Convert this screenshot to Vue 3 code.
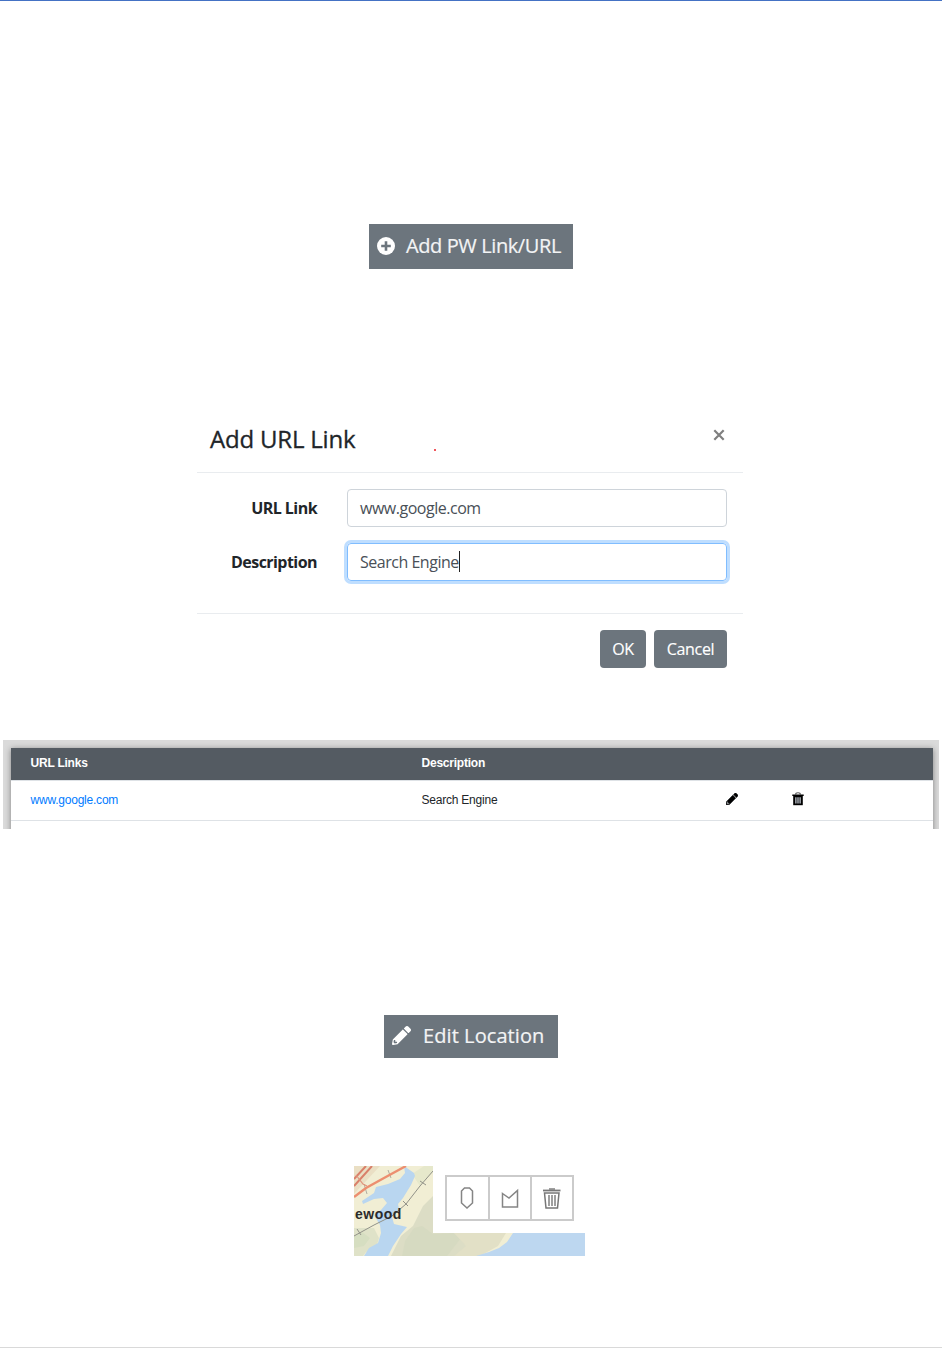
<script setup>
import { ref } from 'vue'

const urlLink = ref('www.google.com')
const description = ref('Search Engine')

const links = ref([{ url: 'www.google.com', description: 'Search Engine' }])

// solid pencil, shared by the table row and the edit button
const PENCIL_PATH =
  'M498 142l-46 46c-5 5-13 5-17 0L324 77c-5-5-5-12 0-17l46-46c19-19 49-19 68 0l60 60c19 19 19 49 0 68zM284 100L22 362 0 484c-3 16 12 30 28 28l122-22 262-262c5-5 5-13 0-17L301 100c-4-5-12-5-17 0zM88 424h48v36l-64 12-32-31 12-65h36v48z'
</script>

<template>
  <main class="page">
    <button class="action add" type="button">
      <svg class="plus-icon" viewBox="0 0 18 18">
        <circle cx="9" cy="9" r="9" fill="#fff" />
        <path d="M9 4.2v9.6M4.2 9h9.6" stroke="#6c757d" stroke-width="2.6" />
      </svg>
      <span class="add-text">Add PW Link/URL</span>
    </button>

    <section class="modal">
      <header class="modal-header">
        <h5>Add URL Link</h5>
        <i class="dot"></i>
        <button class="close" type="button" aria-label="Close">
          <svg viewBox="0 0 12 12">
            <path d="M1.3 1.3l9.4 9.4M10.7 1.3L1.3 10.7" stroke="#7f7f7f" stroke-width="2.2" />
          </svg>
        </button>
      </header>
      <div class="modal-body">
        <div class="field">
          <label>URL Link</label>
          <div class="input">{{ urlLink }}</div>
        </div>
        <div class="field">
          <label>Description</label>
          <div class="input focused">
            <span>{{ description }}</span><i class="caret"></i>
          </div>
        </div>
      </div>
      <footer class="modal-footer">
        <button class="btn ok" type="button">OK</button>
        <button class="btn cancel" type="button">Cancel</button>
      </footer>
    </section>

    <section class="table-wrap">
      <div class="table">
        <div class="row head">
          <span>URL Links</span>
          <span>Description</span>
        </div>
        <div v-for="link in links" :key="link.url" class="row">
          <a>{{ link.url }}</a>
          <span>{{ link.description }}</span>
          <svg class="row-pencil" viewBox="0 0 512 512">
            <path :d="PENCIL_PATH" stroke="#212529" stroke-width="24" />
          </svg>
          <svg class="row-trash" viewBox="0 0 12 14">
            <path d="M3.6 2.6C3.6 1 4.6.8 6 .8s2.4.2 2.4 1.8" fill="none" stroke="#555" stroke-width="1.1" />
            <path d="M.3 2.5h11.4V4H.3z" />
            <path d="M1.2 4h9.6v9.2H1.2z" />
            <path d="M3.9 5.3v6.2M6 5.3v6.2M8.1 5.3v6.2" stroke="#dfe6f0" stroke-width="1.1" />
          </svg>
        </div>
      </div>
    </section>

    <button class="action edit" type="button">
      <svg class="edit-pencil" viewBox="0 0 512 512"><path :d="PENCIL_PATH" fill="#fff" /></svg>
      <span class="edit-text">Edit Location</span>
    </button>

    <section class="map">
      <svg class="map-tiles" viewBox="0 0 231 90">
        <rect width="231" height="90" fill="#f1eed4" />
        <path d="M0 0h26L0 28z" fill="#eadfc4" />
        <!-- hills -->
        <path d="M79 30l-10 10-10 20-12 10-10 20h90l16-23V60H79z" fill="#dcddc5" />
        <path d="M60 62l8-2 11 8 20-1 8 5-14 18H48l3-15z" fill="#d6dac1" />
        <path d="M100 67h52l-8 13-18 10h-26l12-10z" fill="#e2e0c6" />
        <path d="M0 62h20l5 10-3 10-10 4-3 4H0z" fill="#dfe2c8" />
        <path d="M0 70l8-4 8 6-6 8-10 2z" fill="#d6dec1" />
        <path d="M58 8l12-8h9v6L66 20z" fill="#e6e8cb" />
        <!-- water -->
        <path
          d="M50 0l1 7-5 6-12 5-12 3-2 6-12 8 1 3 11-5 9-1 4 5-6 7-7 5 6 10 1 8-3 10-9 5-5 8h24l5-10 8-12 6-7-13-3-2-7 7-8-1-5 5-6 8-13 4-9-1-3z"
          fill="#b9d6f0"
        />
        <path d="M122 90l13-4 10-4 8-6 6-9h72v23z" fill="#bdd7f0" />
        <!-- railway -->
        <path d="M0 70l20-11 18-9 14-12 14-18L79 5" fill="none" stroke="#929289" stroke-width="1" />
        <path d="M3 63l4 6M49 35l5 5M66 15l6 4" stroke="#929289" stroke-width="1" />
        <!-- roads -->
        <path d="M10 18l3 10M34 4l3 8" stroke="#b1aea0" stroke-width="1" />
        <path d="M0 31l12-9 18-10L52 0" fill="none" stroke="#ec8f70" stroke-width="2.4" />
        <path d="M0 13L12 0M0 20L18 0" fill="none" stroke="#d9806a" stroke-width="2" />
        <path d="M2 9l7 9 4 2" fill="none" stroke="#e0947c" stroke-width="1.2" />
        <path d="M79 0h152v67H79z" fill="#fff" />
      </svg>
      <span class="place">ewood</span>
      <div class="tools">
        <button type="button" aria-label="Point">
          <svg viewBox="0 0 43 44">
            <path d="M18.5 12h5l3 3v12L21 32l-5.500-5V15z" fill="none" stroke="#858585" stroke-width="1.5" />
          </svg>
        </button>
        <button type="button" aria-label="Polygon">
          <svg viewBox="0 0 43 44">
            <path d="M13.500 17.500l6.500 4.500 8.500-7.500V31h-15z" fill="none" stroke="#858585" stroke-width="1.5" />
          </svg>
        </button>
        <button type="button" aria-label="Delete">
          <svg viewBox="0 0 43 44" fill="none" stroke="#777">
            <path d="M12 14.5h17.500" stroke-width="1.8" />
            <path d="M18 13h6" stroke-width="1.4" />
            <path d="M13.5 17H28l-1.500 15H15z" stroke-width="1.5" />
            <path d="M18 19v11M21 19v11M24 19v11" stroke-width="1.4" />
          </svg>
        </button>
      </div>
    </section>
  </main>
</template>

<style>
body {
  margin: 0;
  background: #fff;
}
</style>

<style scoped>
.page {
  box-sizing: border-box;
  height: 1348px;
  display: flex;
  flex-direction: column;
  align-items: center;
  overflow: hidden;
  border-top: 1px solid #4472c4;
  border-bottom: 1px solid #d9d9d9;
  font-family: 'Open Sans', 'Noto Sans', sans-serif;
  color: #212529;
}

button {
  font-family: inherit;
  border: none;
  padding: 0;
  cursor: pointer;
}

svg {
  display: block;
  flex: none;
}

span,
label,
h5 {
  white-space: nowrap;
}

.action {
  flex: none;
  display: flex;
  align-items: center;
  background: #6c757d;
  color: #f3f4f5;
  -webkit-text-stroke: 0.2px;
}

.add {
  width: 204px;
  height: 45px;
  margin-top: 223px;
  padding: 0 0 1px 8px;
  font-size: 20px;
}

.plus-icon {
  width: 18px;
  height: 18px;
  margin-right: 11px;
}

.add-text {
  margin-bottom: 2px;
  letter-spacing: -0.4px;
}

.modal {
  width: 546px;
  height: 263px;
  flex: none;
  margin: 137px 0 0 -2px;
}

.modal-header {
  box-sizing: border-box;
  height: 67px;
  display: flex;
  align-items: flex-start;
  padding: 15px 18.5px 0 13px;
  border-bottom: 1px solid #e9ecef;
}

h5 {
  width: 145px;
  margin: 0;
  font-size: 24px;
  font-weight: 400;
  line-height: 36px;
  letter-spacing: -0.2px;
  -webkit-text-stroke: 0.3px;
}

.dot {
  width: 2px;
  height: 2px;
  margin: 28px 0 0 78.5px;
  border-radius: 1px;
  background: #ed1c24;
}

.close {
  width: 12px;
  height: 12px;
  margin: 8px 0 0 auto;
  background: none;
}

.modal-body {
  box-sizing: border-box;
  height: 140px;
  display: flex;
  flex-direction: column;
  gap: 16px;
  padding: 16px 16px 0;
}

.field {
  display: flex;
  justify-content: space-between;
}

label {
  width: 104px;
  margin-right: 1px;
  text-align: right;
  font-size: 16px;
  font-weight: 700;
  line-height: 38px;
  letter-spacing: -0.55px;
}

.input {
  box-sizing: border-box;
  width: 380px;
  height: 38px;
  display: flex;
  align-items: center;
  padding-left: 12px;
  border: 1px solid #ced4da;
  border-radius: 4px;
  font-size: 16px;
  letter-spacing: -0.48px;
  color: #495057;
}

.focused {
  border-color: #80bdff;
  box-shadow: 0 0 0 3px #bfdeff;
}

.caret {
  width: 1px;
  height: 21px;
  margin-bottom: 1px;
  background: #222;
}

.modal-footer {
  display: flex;
  justify-content: flex-end;
  gap: 8px;
  padding: 16px 16px 0;
  border-top: 1px solid #e9ecef;
}

.btn {
  height: 38px;
  border-radius: 4px;
  background: #6c757d;
  color: #fff;
  font-size: 16px;
  letter-spacing: -0.3px;
  -webkit-text-stroke: 0.15px;
}

.ok {
  width: 46px;
}

.cancel {
  width: 73px;
}

.table-wrap {
  box-sizing: border-box;
  width: 936px;
  height: 89px;
  flex: none;
  margin-top: 71px;
  padding: 8px 6px 0 8px;
  overflow: hidden;
  background: #dadada;
}

.table {
  height: 95px;
  background: #fff;
  box-shadow: 0 1px 6px rgba(0, 0, 0, 0.4);
}

.row {
  box-sizing: border-box;
  height: 40px;
  display: grid;
  grid-template-columns: 391px 304px 66px 1fr;
  align-items: center;
  padding: 0 0 2px 19.5px;
  border-bottom: 1px solid #dee2e6;
  font: 12px 'Liberation Sans', Arial, sans-serif;
  letter-spacing: -0.22px;
  color: #212529;
}

.head {
  height: 33px;
  background: #545b62;
  font-weight: 700;
  color: #fff;
}

.row a {
  color: #007bff;
}

.row-pencil {
  width: 12px;
  height: 12px;
  margin-top: -1px;
}

.row-trash {
  width: 12px;
  height: 14px;
  margin-top: -1px;
}

.edit {
  width: 174px;
  height: 43px;
  margin-top: 186px;
  padding: 0 0 2px 8px;
  font-size: 20px;
}

.edit-pencil {
  width: 19px;
  height: 19px;
  margin-right: 12px;
}

.edit-text {
  letter-spacing: 0.08px;
}

.map {
  position: relative;
  width: 231px;
  height: 90px;
  flex: none;
  margin: 108px 0 0 -3px;
  overflow: hidden;
}

.map-tiles {
  width: 231px;
  height: 90px;
}

/* place name and draw tools lie over the map */
.place {
  position: absolute;
  left: 1px;
  top: 40px;
  font: bold 14px/16px 'Liberation Sans', Arial, sans-serif;
  letter-spacing: 0.5px;
  color: #2b2b2b;
}

.tools {
  position: absolute;
  left: 91px;
  top: 9px;
  display: flex;
  border: 2px solid #cbcbcb;
}

.tools button {
  width: 41px;
  height: 42px;
  overflow: hidden;
  background: #fff;
}

.tools button + button {
  border-left: 2px solid #cbcbcb;
  width: 42px;
}

.tools svg {
  width: 43px;
  height: 44px;
  margin: -1px;
}
</style>
